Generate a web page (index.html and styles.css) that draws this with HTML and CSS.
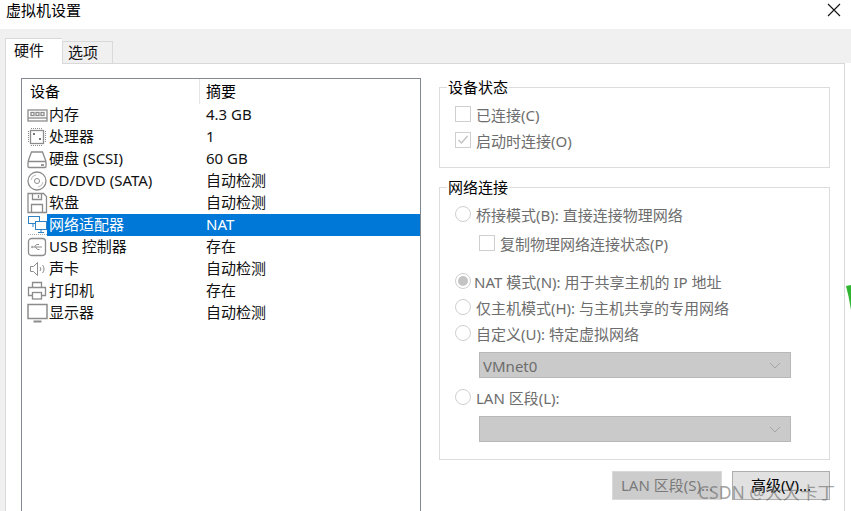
FILE: index.html
```html
<!DOCTYPE html>
<html lang="zh-CN">
<head>
    <meta charset="utf-8">
    <title>虚拟机设置</title>
    <link rel="stylesheet" href="styles.css">
</head>
<body>
    <div class="titlebar">
        <span class="title">虚拟机设置</span>
        <svg class="close" width="14" height="14" viewBox="0 0 14 14"><path d="M1 1L13 13M13 1L1 13" stroke="#111" stroke-width="1.1" fill="none"/></svg>
    </div>

    <div class="tabs">
        <div class="tab active">硬件</div>
        <div class="tab">选项</div>
    </div>

    <div class="panel">
        <div class="devices">
            <div class="dev-head">
                <div class="col1">设备</div>
                <div class="col2">摘要</div>
            </div>
            <div class="dev">
                <svg class="ico" width="22" height="22" viewBox="0 0 22 22"><g fill="none" stroke="#8c8c8c" stroke-width="1.3"><rect x="1" y="6" width="19" height="11"/><rect x="4" y="8.500" width="3" height="3"/><rect x="9" y="8.500" width="3" height="3"/><rect x="14" y="8.500" width="3" height="3"/><path d="M1 14h19"/></g></svg>
                <span class="name">内存</span><span class="val">4.3 GB</span>
            </div>
            <div class="dev">
                <svg class="ico" width="22" height="22" viewBox="0 0 22 22"><g fill="none" stroke="#8c8c8c"><rect x="3.500" y="4.500" width="13" height="13" stroke-width="1.300"/><path stroke-dasharray="1 1" d="M4 2.500h12M4 19.500h12M1.500 5v12M18.500 5v12"/></g><rect x="6" y="7" width="2" height="2" fill="#777"/><rect x="12" y="12" width="2" height="2" fill="#777"/></svg>
                <span class="name">处理器</span><span class="val">1</span>
            </div>
            <div class="dev">
                <svg class="ico" width="22" height="22" viewBox="0 0 22 22"><g fill="none" stroke="#8c8c8c" stroke-width="1.300"><path d="M1 13.500L4.500 4h11l3.500 9.500"/><rect x="1" y="13.500" width="18" height="6" rx="1"/></g><rect x="14" y="16" width="3" height="2" fill="#999"/></svg>
                <span class="name">硬盘 (SCSI)</span><span class="val">60 GB</span>
            </div>
            <div class="dev">
                <svg class="ico" width="22" height="22" viewBox="0 0 22 22"><g fill="none" stroke="#8c8c8c"><circle cx="10" cy="11" r="9" stroke-width="1.300"/><circle cx="10" cy="11" r="2.500"/><path d="M4 10a6 6 0 0 1 5-5M16 12a6 6 0 0 1-5 5" stroke="#bbb"/></g></svg>
                <span class="name">CD/DVD (SATA)</span><span class="val">自动检测</span>
            </div>
            <div class="dev">
                <svg class="ico" width="22" height="22" viewBox="0 0 22 22"><g fill="none" stroke="#8c8c8c" stroke-width="1.300"><path d="M1 1.500h15.500l3 3v16H1z"/><path d="M5.500 1.500v6h9v-6M4.500 20.500v-8h11v8"/><path d="M11.500 3v3"/></g></svg>
                <span class="name">软盘</span><span class="val">自动检测</span>
            </div>
            <div class="dev selected">
                <svg class="ico" width="22" height="22" viewBox="0 0 22 22"><g fill="#fff" stroke="#2f83c4"><rect x="1.500" y="2.500" width="11" height="7"/><rect x="8.500" y="7.500" width="11" height="8"/></g><path d="M6 10v3M14 16v2M11 18.500h6" stroke="#2f83c4" fill="none"/><path d="M1 20.500h19" stroke="#aaa" stroke-dasharray="1 1" fill="none"/></svg>
                <span class="name">网络适配器</span><span class="val">NAT</span>
            </div>
            <div class="dev">
                <svg class="ico" width="22" height="22" viewBox="0 0 22 22"><rect x="1.500" y="2.500" width="17" height="17" rx="3" fill="none" stroke="#8c8c8c" stroke-width="1.300"/><path d="M5 11h10M7.500 11l2-2.500h2.500M8.500 11l2 2.500h2" fill="none" stroke="#8c8c8c"/><path d="M5.500 9.500L3.800 11l1.700 1.500z" fill="#8c8c8c"/></svg>
                <span class="name">USB 控制器</span><span class="val">存在</span>
            </div>
            <div class="dev">
                <svg class="ico" width="22" height="22" viewBox="0 0 22 22"><g fill="none" stroke="#8c8c8c"><path d="M3.500 8.500h3l4-4v13l-4-4h-3z"/><path d="M13 9a3 3 0 0 1 0 4M15.500 7a6 6 0 0 1 0 8"/></g></svg>
                <span class="name">声卡</span><span class="val">自动检测</span>
            </div>
            <div class="dev">
                <svg class="ico" width="22" height="22" viewBox="0 0 22 22"><g fill="none" stroke="#8c8c8c" stroke-width="1.300"><path d="M5.500 7.500v-5h9v5"/><path d="M5 15.500H1.500v-8h17v8H15"/><rect x="5.500" y="12.500" width="9" height="6.500"/></g></svg>
                <span class="name">打印机</span><span class="val">存在</span>
            </div>
            <div class="dev">
                <svg class="ico" width="22" height="22" viewBox="0 0 22 22"><rect x="1" y="2.500" width="19" height="14" fill="none" stroke="#8c8c8c" stroke-width="1.500"/><path d="M6.500 19.500h8" stroke="#8c8c8c" stroke-width="2" fill="none"/></svg>
                <span class="name">显示器</span><span class="val">自动检测</span>
            </div>
        </div>

        <div class="side">
            <fieldset class="group status">
                <legend>设备状态</legend>
                <div class="opt"><span class="box"></span>已连接(C)</div>
                <div class="opt"><span class="box"><svg width="14" height="14" viewBox="0 0 14 14"><path d="M2.500 7l3 3 6-7" fill="none" stroke="#c0c0c0" stroke-width="1.300"/></svg></span>启动时连接(O)</div>
            </fieldset>

            <fieldset class="group network">
                <legend>网络连接</legend>
                <div class="opt"><span class="radio"></span>桥接模式(B): 直接连接物理网络</div>
                <div class="opt sub"><span class="box"></span>复制物理网络连接状态(P)</div>
                <div class="opt nat"><span class="radio on"></span>NAT 模式(N): 用于共享主机的 IP 地址</div>
                <div class="opt"><span class="radio"></span>仅主机模式(H): 与主机共享的专用网络</div>
                <div class="opt"><span class="radio"></span>自定义(U): 特定虚拟网络</div>
                <div class="combo">VMnet0<svg class="arrow" width="12" height="7" viewBox="0 0 12 7"><path d="M1 1l5 5 5-5" fill="none" stroke="#a4a4a4"/></svg></div>
                <div class="opt lan"><span class="radio"></span>LAN 区段(L):</div>
                <div class="combo"><svg class="arrow" width="12" height="7" viewBox="0 0 12 7"><path d="M1 1l5 5 5-5" fill="none" stroke="#a4a4a4"/></svg></div>
            </fieldset>

            <div class="buttons">
                <div class="btn off">LAN 区段(S)...</div>
                <div class="btn">高级(V)...</div>
            </div>
        </div>
    </div>

    <div class="mark">CSDN @大大卡丁</div>
    <div class="green"></div>
</body>
</html>
```

FILE: styles.css
```css
html, body {
    margin: 0;
    height: 511px;
    overflow: hidden;
}

body {
    background: #f0f0f0;
    font-family: "Noto Sans", "Noto Sans CJK SC", sans-serif;
    font-size: 15px;
    color: #000;
    position: relative;
}

.titlebar {
    height: 19px;
    background: #fff;
    display: flex;
    justify-content: space-between;
    align-items: center;
    padding: 0 10px 10px 6px;
}

.tabs {
    display: flex;
    align-items: flex-end;
    height: 34px;
    padding-left: 5px;
}

.tab {
    width: 44px;
    height: 21px;
    line-height: 21px;
    padding-left: 5px;
    background: #f0f0f0;
    border: 1px solid #d9d9d9;
    border-bottom: none;
    color: #111;
}

.tab.active {
    width: 48px;
    height: 25px;
    line-height: 23px;
    padding-left: 8px;
    background: #fff;
    border-right: none;
    margin-bottom: -1px;
    position: relative;
    z-index: 1;
}

.panel {
    display: flex;
    align-items: flex-start;
    width: 840px;
    height: 460px;
    margin-left: 5px;
    box-sizing: border-box;
    padding: 14px 0 0 15px;
    background: #fff;
    border-top: 1px solid #d9d9d9;
    border-left: 1px solid #d9d9d9;
    border-right: 1px solid #d9d9d9;
    box-shadow: 10px 0 0 #fff;
}

.devices {
    width: 398px;
    height: 440px;
    flex: none;
    border: 1px solid #828790;
    background: #fff;
}

.dev-head {
    display: flex;
    height: 25px;
    line-height: 24px;
}

.col1 {
    width: 169px;
    padding-left: 8px;
    border-right: 1px solid #e5e5e5;
}

.col2 {
    padding-left: 6px;
}

.dev {
    display: flex;
    align-items: center;
    height: 22px;
    padding-left: 5px;
    color: #111;
}

.ico {
    flex: none;
}

.name {
    width: 157px;
    flex: none;
    height: 22px;
    line-height: 21px;
    margin-left: -2px;
    padding-left: 2px;
    white-space: nowrap;
}

.val {
    flex: 1;
    height: 22px;
    line-height: 21px;
}

.dev.selected .name,
.dev.selected .val {
    background: #0078d7;
    color: #fff;
}

.side {
    width: 391px;
    margin-left: 18px;
    margin-top: -1px;
    flex: none;
}

.group {
    margin: 0;
    padding: 0 0 0 15px;
    border: 1px solid #dcdcdc;
    color: #6d6d6d;
    box-sizing: border-box;
}

.group legend {
    color: #000;
    padding: 0 1px;
    margin-left: -8px;
    line-height: 20px;
}

.status {
    height: 91px;
}

.network {
    height: 283px;
    margin-top: 9px;
}

.opt {
    display: flex;
    align-items: center;
    height: 26px;
    white-space: nowrap;
}

.status .opt:first-of-type {
    margin-top: 4px;
}

.box {
    width: 14px;
    height: 14px;
    border: 1px solid #cfcfcf;
    margin-right: 5px;
    flex: none;
    display: flex;
}

.radio {
    width: 14px;
    height: 14px;
    border: 1px solid #cfcfcf;
    border-radius: 50%;
    margin-right: 5px;
    flex: none;
    display: flex;
    align-items: center;
    justify-content: center;
}

.radio.on {
    margin-right: 3px;
}

.radio.on::after {
    content: "";
    width: 10px;
    height: 10px;
    border-radius: 50%;
    background: #c4c4c4;
}

.network .opt:first-of-type {
    margin-top: 5px;
    height: 24px;
}

.sub {
    margin-left: 24px;
    height: 34px;
}

.nat {
    margin-top: 8px;
}

.combo {
    position: relative;
    width: 312px;
    height: 26px;
    line-height: 26px;
    margin: 6px 0 0 24px;
    padding-left: 3px;
    box-sizing: border-box;
    background: #cacaca;
    border: 1px solid #b8b8b8;
    color: #6d6d6d;
}

.arrow {
    position: absolute;
    right: 9px;
    top: 9px;
}

.lan {
    margin-top: 6px;
}

.buttons {
    display: flex;
    justify-content: flex-end;
    gap: 10px;
    margin-top: 11px;
}

.btn {
    height: 29px;
    line-height: 27px;
    box-sizing: border-box;
    width: 98px;
    text-align: center;
    border: 1px solid #adadad;
    background: #e1e1e1;
}

.btn.off {
    width: 110px;
    background: #cccccc;
    border-color: #d9d9d9;
    color: #7a7a7a;
}

.mark {
    position: absolute;
    left: 698px;
    top: 482px;
    font-size: 17.5px;
    line-height: 20px;
    color: rgba(110, 110, 110, 0.65);
    white-space: nowrap;
}

.green {
    position: absolute;
    left: 846px;
    top: 285px;
    width: 5px;
    height: 25px;
    background: #2fb52f;
    clip-path: polygon(0 4%, 100% 0, 100% 100%, 50% 45%);
}
```
